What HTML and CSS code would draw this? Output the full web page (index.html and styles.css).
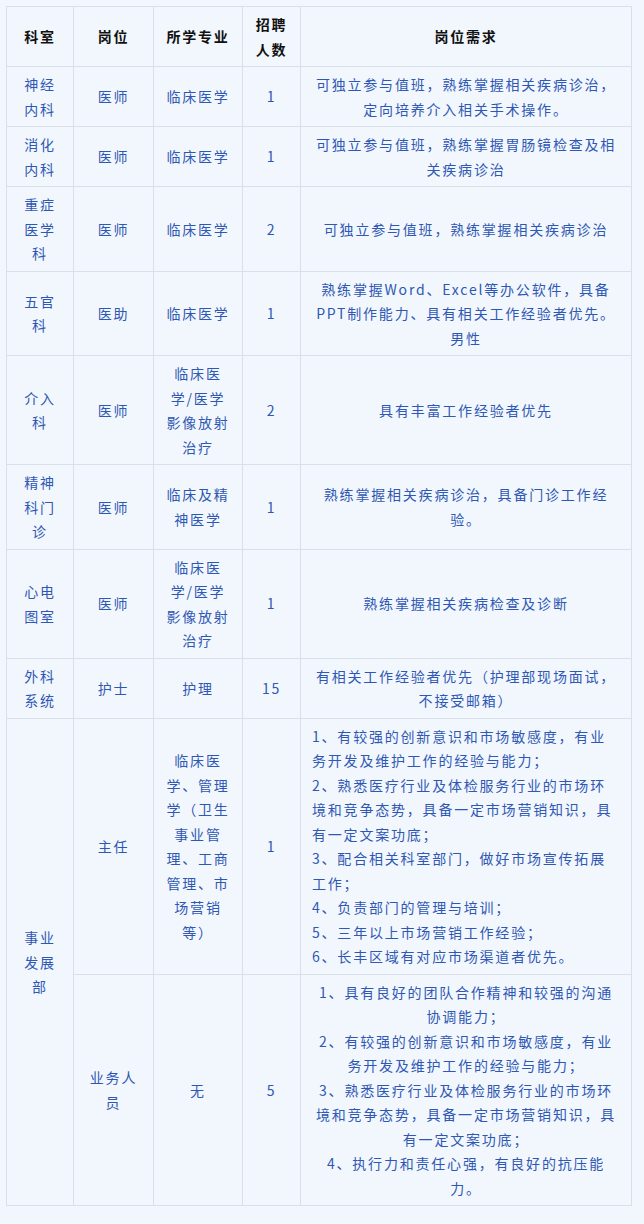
FILE: index.html
```html
<!DOCTYPE html>
<html lang="zh-CN">
<head>
<meta charset="utf-8">
<title>招聘岗位</title>
<link rel="stylesheet" href="styles.css">
</head>
<body>
<table class="jobs">
  <colgroup>
    <col class="c1"><col class="c2"><col class="c3"><col class="c4"><col class="c5">
  </colgroup>
  <thead>
    <tr><th>科室</th><th>岗位</th><th>所学专业</th><th>招聘人数</th><th>岗位需求</th></tr>
  </thead>
  <tbody>
    <tr><td>神经内科</td><td>医师</td><td>临床医学</td><td>1</td><td>可独立参与值班，熟练掌握相关疾病诊治，定向培养介入相关手术操作。</td></tr>
    <tr><td>消化内科</td><td>医师</td><td>临床医学</td><td>1</td><td>可独立参与值班，熟练掌握胃肠镜检查及相关疾病诊治</td></tr>
    <tr><td>重症医学科</td><td>医师</td><td>临床医学</td><td>2</td><td>可独立参与值班，熟练掌握相关疾病诊治</td></tr>
    <tr><td>五官科</td><td>医助</td><td>临床医学</td><td>1</td><td>熟练掌握Word、Excel等办公软件，具备PPT制作能力、具有相关工作经验者优先。男性</td></tr>
    <tr><td>介入科</td><td>医师</td><td>临床医学/医学影像放射治疗</td><td>2</td><td>具有丰富工作经验者优先</td></tr>
    <tr><td>精神科门诊</td><td>医师</td><td>临床及精神医学</td><td>1</td><td>熟练掌握相关疾病诊治，具备门诊工作经验。</td></tr>
    <tr><td>心电图室</td><td>医师</td><td>临床医学/医学影像放射治疗</td><td>1</td><td>熟练掌握相关疾病检查及诊断</td></tr>
    <tr><td>外科系统</td><td>护士</td><td>护理</td><td>15</td><td>有相关工作经验者优先（护理部现场面试，不接受邮箱）</td></tr>
    <tr>
      <td rowspan="2">事业发展部</td><td>主任</td><td>临床医学、管理学（卫生事业管理、工商管理、市场营销等）</td><td>1</td>
      <td class="left">1、有较强的创新意识和市场敏感度，有业务开发及维护工作的经验与能力；<br>2、熟悉医疗行业及体检服务行业的市场环境和竞争态势，具备一定市场营销知识，具有一定文案功底；<br>3、配合相关科室部门，做好市场宣传拓展工作；<br>4、负责部门的管理与培训；<br>5、三年以上市场营销工作经验；<br>6、长丰区域有对应市场渠道者优先。</td>
    </tr>
    <tr>
      <td>业务人员</td><td>无</td><td>5</td>
      <td>1、具有良好的团队合作精神和较强的沟通协调能力；<br>2、有较强的创新意识和市场敏感度，有业务开发及维护工作的经验与能力；<br>3、熟悉医疗行业及体检服务行业的市场环境和竞争态势，具备一定市场营销知识，具有一定文案功底；<br>4、执行力和责任心强，有良好的抗压能力。</td>
    </tr>
  </tbody>
</table>
</body>
</html>
```

FILE: styles.css
```css
html, body {
  margin: 0;
  background: #f2f7fd;
}
body {
  padding: 6px;
  font-family: "Noto Sans CJK SC", "Noto Sans", sans-serif;
}
.jobs {
  border-collapse: collapse;
  table-layout: fixed;
  width: 625px;
  background: #f2f7fd;
}
.c1 { width: 67px; }
.c2 { width: 80px; }
.c3 { width: 89px; }
.c4 { width: 58px; }
.c5 { width: 331px; }
.jobs th, .jobs td {
  border: 1px solid #dae0e9;
  padding: 5px 11px;
  font-size: 14px;
  line-height: 24.5px;
  letter-spacing: 1.8px;
  text-align: center;
  vertical-align: middle;
}
.jobs th {
  color: #111;
  font-weight: bold;
}
.jobs td {
  color: #2f58b4;
}
.jobs td.left {
  text-align: left;
}
```
